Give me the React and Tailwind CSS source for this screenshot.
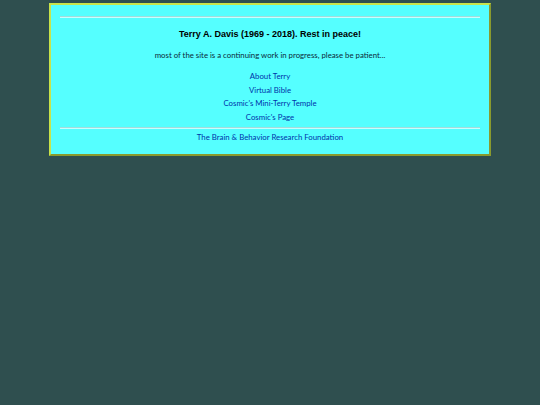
import React from "react";

const links = ["About Terry", "Virtual Bible", "Cosmic's Mini-Terry Temple", "Cosmic's Page"];

export default function App() {
  return (
    <div className="min-h-[405px] w-full bg-[#2f4f4f] pt-[3px]">
      <div className="mx-auto w-[442px] border-2 border-t-[#c9e34a] border-l-[#c9e34a] border-b-[#8a9a2e] border-r-[#8a9a2e] bg-[#55ffff] px-[9px] pt-[11px] pb-[11px] text-center font-['Lato',sans-serif] text-[7.8px] text-[#0b2a3a]">
        <hr className="border-t border-b border-t-[#a3dcdc] border-b-[#c6ffff]" />
        <h1 className="mt-[10px] font-['Liberation_Sans',Arial,sans-serif] text-[9px] font-bold leading-[12px] text-black">
          Terry A. Davis (1969 - 2018). Rest in peace!
        </h1>
        <p className="mt-[10px] leading-[11px]">most of the site is a continuing work in progress, please be patient...</p>
        <div className="mt-[9px] flex flex-col items-center">
          {links.map((l) => (
            <a key={l} href="#" className="leading-[13.5px] text-[#0033aa]">
              {l}
            </a>
          ))}
        </div>
        <hr className="mt-[3px] border-t border-b border-t-[#a3dcdc] border-b-[#c6ffff]" />
        <a href="#" className="mt-[3px] block leading-[11px] text-[#0033aa]">
          The Brain &amp; Behavior Research Foundation
        </a>
      </div>
    </div>
  );
}
